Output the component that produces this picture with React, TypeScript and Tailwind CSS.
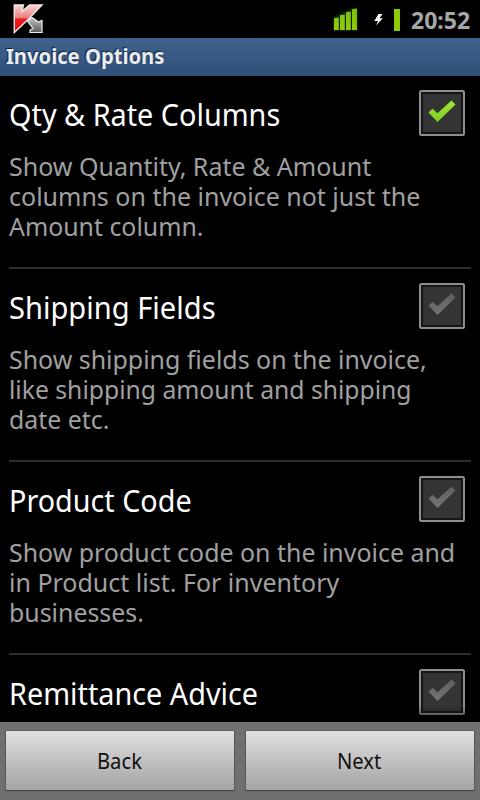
import React from "react";

const font = "font-['Noto_Sans',sans-serif]";

type Line = { text: string; scale: string };
type Option = { title: string; titleClass: string; lines: Line[]; checked?: boolean };

const options: Option[] = [
  {
    title: "Qty & Rate Columns",
    titleClass: "scale-x-[0.96]",
    lines: [
      { text: "Show Quantity, Rate & Amount", scale: "" },
      { text: "columns on the invoice not just the", scale: "" },
      { text: "Amount column.", scale: "scale-x-[0.995]" },
    ],
    checked: true,
  },
  {
    title: "Shipping Fields",
    titleClass: "scale-x-[0.97]",
    lines: [
      { text: "Show shipping fields on the invoice,", scale: "scale-x-[0.997]" },
      { text: "like shipping amount and shipping", scale: "scale-x-[0.988]" },
      { text: "date etc.", scale: "scale-x-[0.995]" },
    ],
  },
  {
    title: "Product Code",
    titleClass: "scale-x-[0.958]",
    lines: [
      { text: "Show product code on the invoice and", scale: "scale-x-[0.997]" },
      { text: "in Product list. For inventory", scale: "" },
      { text: "businesses.", scale: "scale-x-[0.995]" },
    ],
  },
  { title: "Remittance Advice", titleClass: "scale-x-[0.96]", lines: [] },
];

function Logo() {
  return (
    <svg width="32" height="32" viewBox="12 3 32 32" className="block">
      <defs>
        <linearGradient id="red" x1="0" y1="0" x2="0" y2="1">
          <stop offset="0" stopColor="#f6d4d4" />
          <stop offset="0.45" stopColor="#ee7f7f" />
          <stop offset="0.52" stopColor="#e81c1c" />
          <stop offset="1" stopColor="#f00808" />
        </linearGradient>
        <linearGradient id="grey" x1="0" y1="0" x2="0" y2="1">
          <stop offset="0" stopColor="#c4c4c4" />
          <stop offset="1" stopColor="#5c5c5c" />
        </linearGradient>
      </defs>
      <path d="M27.500 21 L32 17.500 L38.500 22 L42 20.500 V32.500 H30 V30 L33 28.500 Z" fill="url(#grey)" stroke="#ededed" strokeWidth="1.200" />
      <path d="M14.300 5 H23.500 L22 11.500 L29.500 5 H42 L28.500 19 L14.300 32.500 Z" fill="url(#red)" stroke="#f5e6e6" strokeWidth="1.400" />
    </svg>
  );
}

function StatusBar() {
  return (
    <div className="flex h-[38px] shrink-0 items-start bg-black pl-3">
      <div className="pt-[3px]"><Logo /></div>
      <svg width="80" height="38" viewBox="324 0 80 38" className="ml-[280px] block">
        <defs>
          <linearGradient id="sig" x1="0" y1="0" x2="0" y2="1">
            <stop offset="0" stopColor="#7fbe0c" />
            <stop offset="1" stopColor="#8fcc0a" />
          </linearGradient>
        </defs>
        <path d="M333.500 17.500 L351 8.500 H357.500 V30.500 H333.500Z" fill="#1c3300" stroke="#1c3300" strokeWidth="1" opacity="0.7" />
        <path d="M334 18.300l4.800-.7v12.400h-4.800zM340 15.300l4.800-.7v15.400h-4.800zM346 12.300l4.800-.7v18.400h-4.800zM352 9.300l4.900-.7v21.400h-4.900z" fill="url(#sig)" />
        <path d="M378.500 14 L382.500 14 L379.500 18.300 L382.800 18.300 L376 25.500 L378 21 L374.300 21 Z" fill="#fff" />
        <rect x="394" y="9" width="6" height="22" fill="#8fca00" />
      </svg>
      <span className="ml-[7px] mt-[2px] block origin-left scale-x-[0.96] whitespace-nowrap text-[24px] font-bold leading-[35px] text-[#a6a6a6]">20:52</span>
    </div>
  );
}

function CheckBox({ checked }: { checked?: boolean }) {
  return (
    <svg width="46" height="46" viewBox="0 0 46 46" className="block shrink-0">
      <defs>
        <linearGradient id="on" x1="0" y1="0" x2="0" y2="1">
          <stop offset="0" stopColor="#a2e63c" />
          <stop offset="1" stopColor="#7cd01c" />
        </linearGradient>
        <linearGradient id="off" x1="0" y1="0" x2="0" y2="1">
          <stop offset="0" stopColor="#606060" />
          <stop offset="1" stopColor="#747474" />
        </linearGradient>
      </defs>
      <rect x="1" y="1" width="44" height="44" rx="1.500" fill="#161616" stroke="#8e8e8e" strokeWidth="2" />
      <rect x="4" y="4" width="38" height="38" fill="#343434" />
      <path d="M9.500 22.500 L13.500 18.800 L18.500 23.300 L32.500 10.500 L36.500 14.500 L18.500 32 Z" fill={checked ? "url(#on)" : "url(#off)"} />
    </svg>
  );
}

function OptionRow({ option }: { option: Option }) {
  return (
    <section className="mx-[9px] h-[193px] shrink-0 border-b-2 border-[#2d2d2d] pt-[14px]">
      <div className="flex h-[46px] justify-between pr-[6px]">
        <h2 className={`origin-left whitespace-nowrap text-[30px] leading-[50px] text-white ${option.titleClass}`}>{option.title}</h2>
        <CheckBox checked={option.checked} />
      </div>
      <p className="mt-[15px] text-[25px] leading-[30px] text-[#a0a0a0]">
        {option.lines.map((line) => (
          <span key={line.text} className={`block w-max origin-left whitespace-nowrap ${line.scale}`}>{line.text}</span>
        ))}
      </p>
    </section>
  );
}

function NavButton({ label }: { label: string }) {
  return (
    <button className="h-[59px] flex-1 rounded-[1px] bg-gradient-to-b from-[#e0e0e0] to-[#a4a4a4] pr-[2px] text-[22px] text-[#111] shadow-[0_1px_1px_0px_#404040,0_0_1px_1px_#5c5c5c]">
      <span className="inline-block scale-x-[0.92]">{label}</span>
    </button>
  );
}

export default function App() {
  return (
    <div className={`flex h-[800px] w-[480px] flex-col overflow-hidden bg-black ${font}`}>
      <StatusBar />
      <header className="h-[38px] shrink-0 bg-gradient-to-b from-[#3f638f] to-[#2f5077] pl-[6px]">
        <h1 className="w-max origin-left scale-x-[0.918] text-[22px] font-bold leading-[35px] text-[#ececec] [text-shadow:-1px_-1px_1px_#10203a]">Invoice Options</h1>
      </header>
      <main className="flex min-h-0 flex-1 flex-col overflow-hidden">
        {options.map((option) => <OptionRow key={option.title} option={option} />)}
      </main>
      <div className="z-10 -mt-[16px] h-[16px] shrink-0 bg-gradient-to-b from-transparent to-black/60" />
      <footer className="flex h-[78px] shrink-0 gap-[12px] bg-[#707070] px-[6px] pt-[9px]">
        <NavButton label="Back" />
        <NavButton label="Next" />
      </footer>
    </div>
  );
}
